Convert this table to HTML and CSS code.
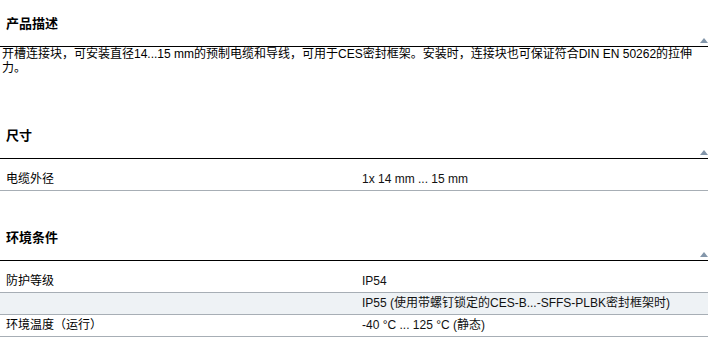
FILE: index.html
```html
<!DOCTYPE html>
<html lang="zh-CN">
<head>
<meta charset="utf-8">
<link rel="stylesheet" href="styles.css">
</head>
<body>
<section class="sec sec-desc">
  <h2 class="sec-head">产品描述<span class="up"></span></h2>
  <p class="desc">开槽连接块，可安装直径14...15 mm的预制电缆和导线，可用于CES密封框架。安装时，连接块也可保证符合DIN EN 50262的拉伸力。</p>
</section>
<section class="sec">
  <h2 class="sec-head">尺寸<span class="up"></span></h2>
  <div class="rows">
    <div class="row"><div class="lbl">电缆外径</div><div class="val">1x 14 mm ... 15 mm</div></div>
  </div>
</section>
<section class="sec">
  <h2 class="sec-head">环境条件<span class="up"></span></h2>
  <div class="rows">
    <div class="row"><div class="lbl">防护等级</div><div class="val">IP54</div></div>
    <div class="row alt"><div class="lbl"></div><div class="val">IP55 (使用带螺钉锁定的CES-B...-SFFS-PLBK密封框架时)</div></div>
    <div class="row"><div class="lbl">环境温度（运行）</div><div class="val">-40 °C ... 125 °C (静态)</div></div>
  </div>
</section>
</body>
</html>
```
FILE: styles.css
```css
* { box-sizing: border-box; }
body {
  margin: 0;
  font-family: "Liberation Sans", "Noto Sans CJK SC", sans-serif;
  font-size: 12px;
  color: #000;
  background: #fff;
}
.sec { padding-bottom: 23px; }
.sec-head {
  position: relative;
  margin: 0;
  padding: 14px 0 12px 6px;
  line-height: 20px;
  font-size: 13px;
  font-weight: bold;
  border-bottom: 1px solid #000;
}
.up {
  position: absolute;
  right: 0;
  bottom: 3px;
  width: 0;
  height: 0;
  border-left: 4px solid transparent;
  border-right: 4px solid transparent;
  border-bottom: 5px solid #8396aa;
}
.desc {
  margin: 0;
  padding: 0 0 14px 2px;
  line-height: 14px;
}
.rows { padding-top: 10px; }
.row {
  display: grid;
  grid-template-columns: 362px 1fr;
  height: 22px;
  line-height: 21px;
  border-bottom: 1px solid #a7aeb5;
}
.row.alt { background: #eef2f5; }
.lbl { padding-left: 6px; }
.val { color: #111; }
```
